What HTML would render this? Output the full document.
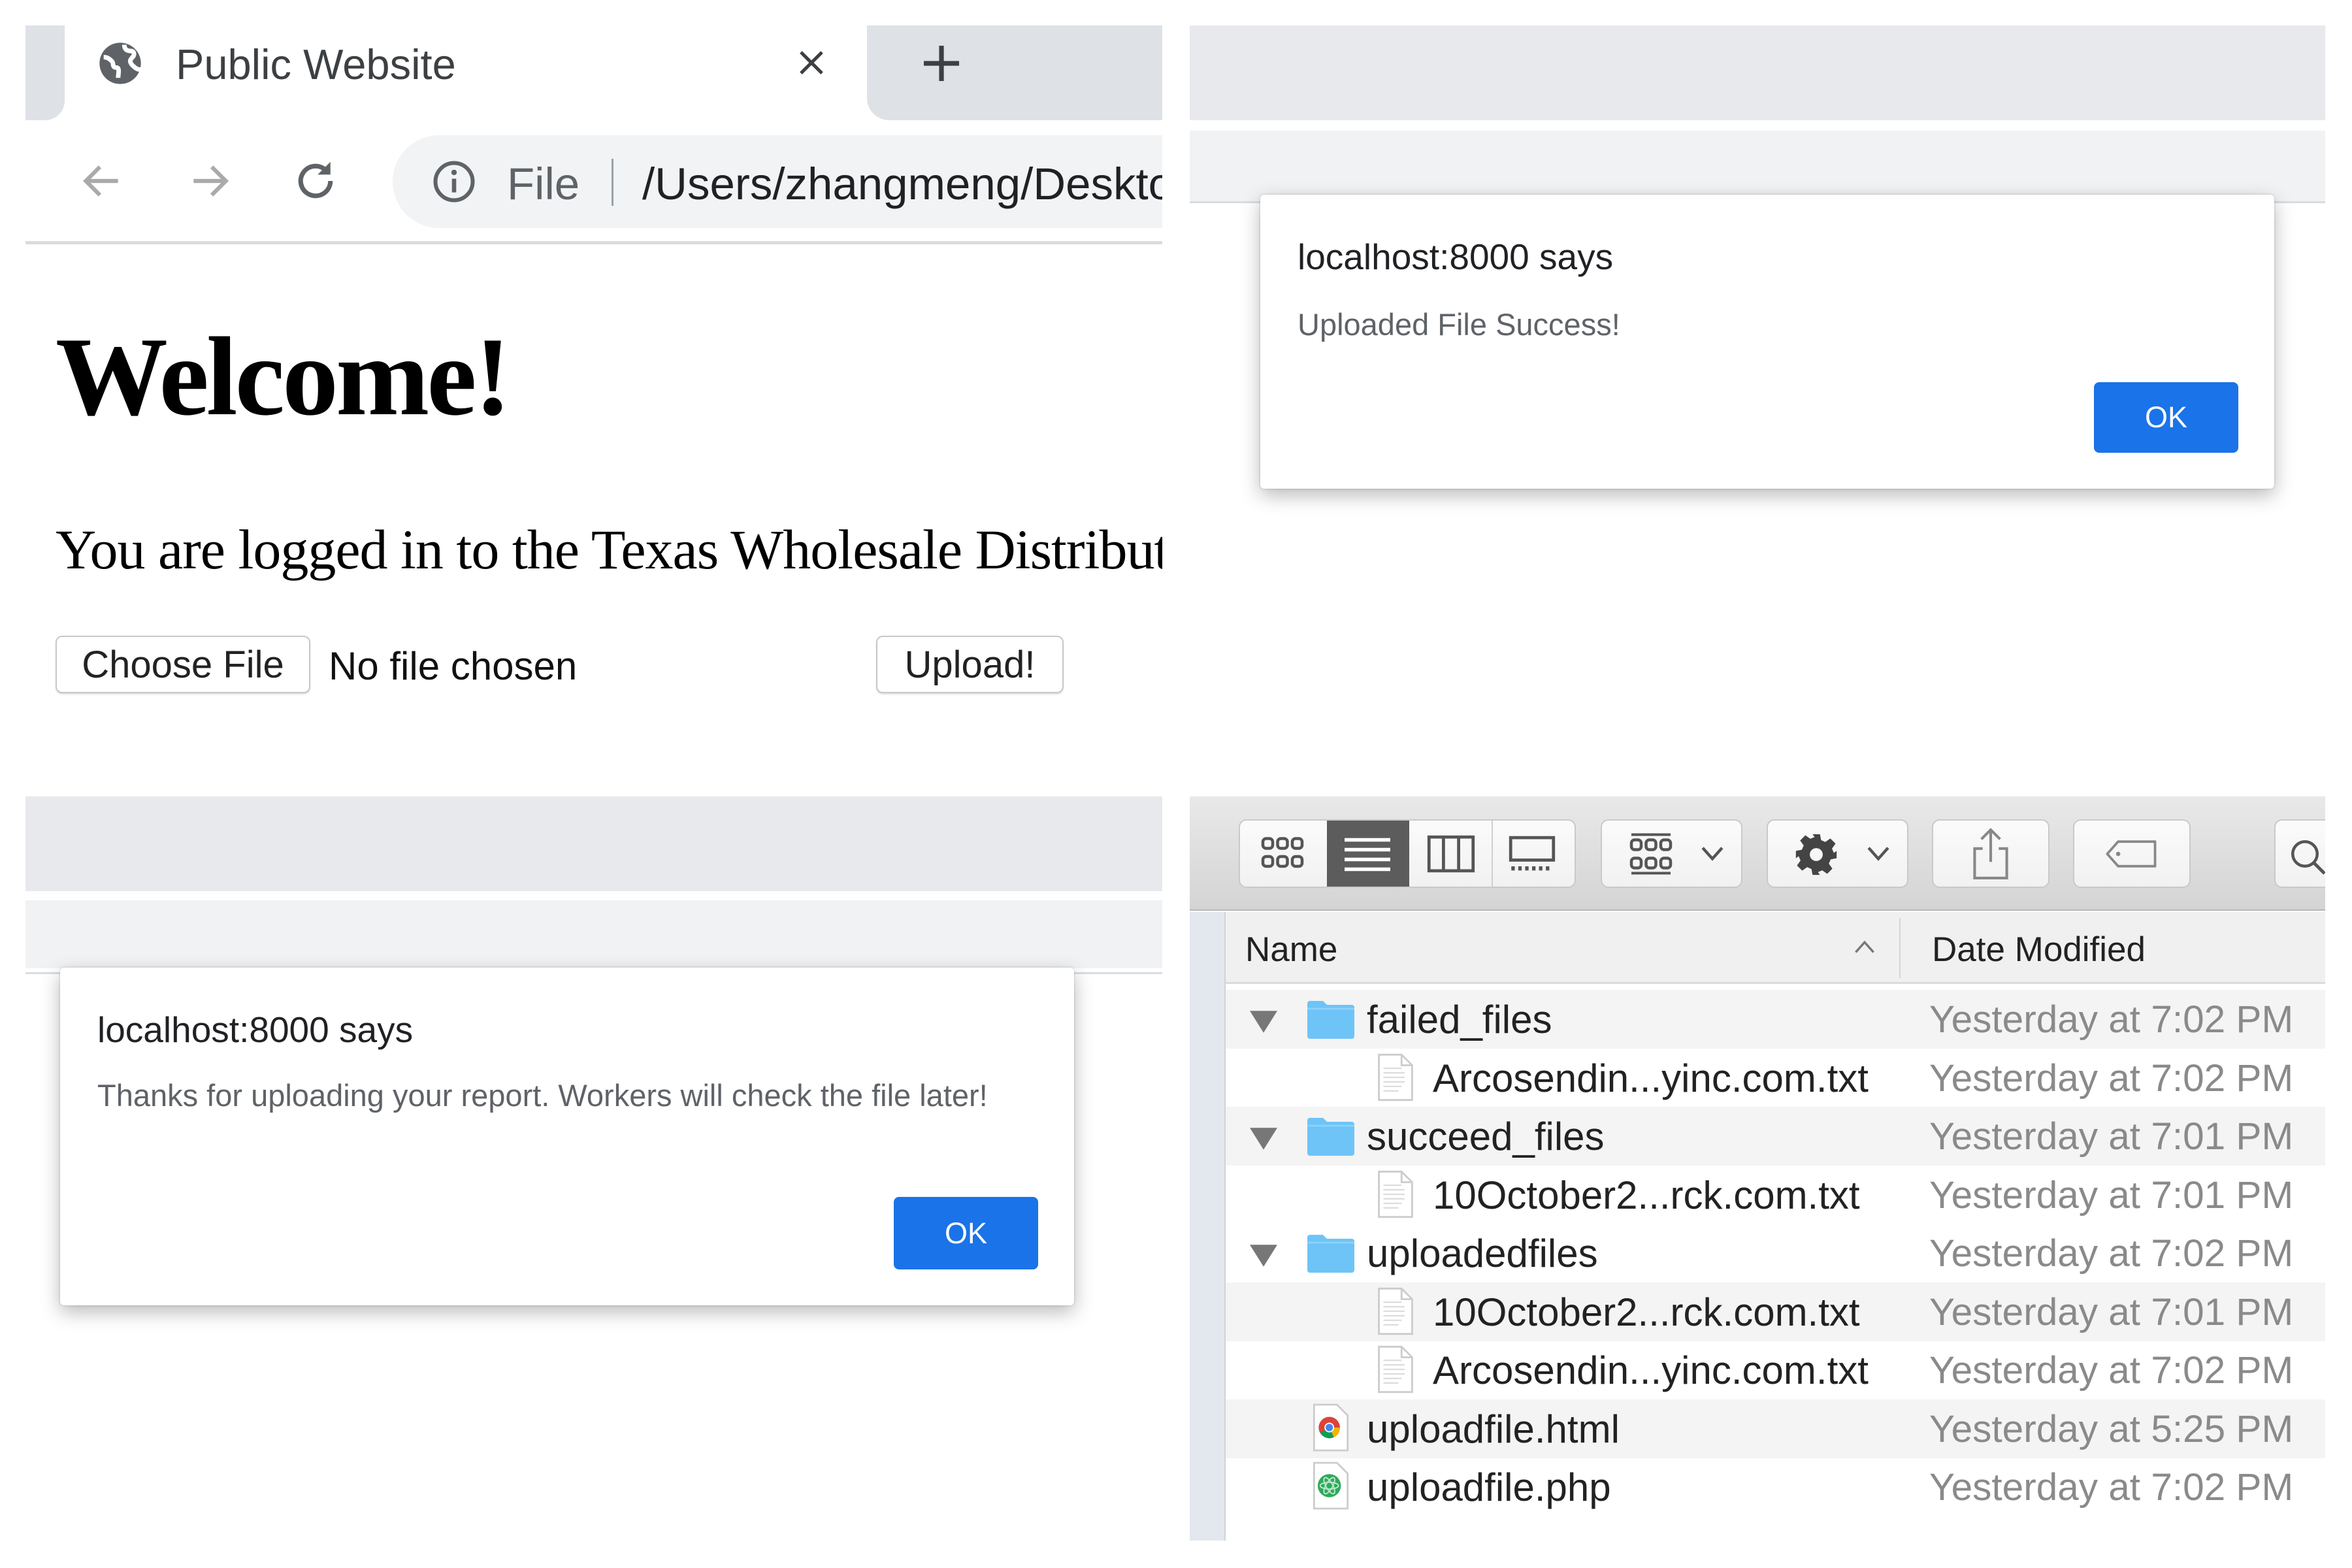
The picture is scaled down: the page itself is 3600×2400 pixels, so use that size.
<!DOCTYPE html>
<html><head><meta charset="utf-8"><style>
*{margin:0;padding:0;box-sizing:border-box}
body{width:3600px;height:2400px;background:#fff;position:relative;overflow:hidden;font-family:"Liberation Sans",sans-serif}
.a{position:absolute}
.panel{position:absolute;overflow:hidden;background:#fff}
.dlg{position:absolute;background:#fff;border-radius:6px;box-shadow:0 10px 30px rgba(0,0,0,.28),0 0 3px rgba(0,0,0,.2)}
.dt{position:absolute;font-size:55px;color:#202124;white-space:nowrap;line-height:1}
.dm{position:absolute;font-size:47px;color:#5f6368;white-space:nowrap;line-height:1}
.ok{position:absolute;background:#1a73e8;border-radius:8px;color:#fff;font-size:45px;display:flex;align-items:center;justify-content:center}
.btn{position:absolute;border:2px solid #c8c8c8;border-radius:10px;background:#fff;box-shadow:0 2px 2px rgba(0,0,0,.12);font-size:58px;color:#222;display:flex;align-items:center;justify-content:center}
.row{position:absolute;left:55px;width:1700px;height:90px}
.row.g{background:#f4f4f4}
.nm{position:absolute;font-size:60px;color:#222;line-height:1;white-space:nowrap}
.dtm{position:absolute;left:1132px;font-size:58.5px;color:#8a8a8a;line-height:1;white-space:nowrap}
.tbb{position:absolute;top:35px;height:105px;background:linear-gradient(#fbfbfb,#f1f1f1);border:2px solid #c9c9c9;border-radius:12px}
</style></head><body>

<div class="panel" style="left:39px;top:39px;width:1740px;height:1110px">
  <div class="a" style="left:0;top:0;width:60px;height:145px;background:#dee1e6;border-bottom-right-radius:30px"></div>
  <div class="a" style="left:1288px;top:0;width:460px;height:145px;background:#dee1e6;border-bottom-left-radius:34px"></div>
  <svg class="a" style="left:107px;top:20px" width="76" height="76" viewBox="0 0 24 24"><circle cx="12" cy="12" r="10" fill="#5f6368"/><path d="M4 9c2 0 3 1 4 2s0 3 2 3 1 3 1 5M14 3c0 2 1 3 3 3s2 2 1 3-2 2 0 4 3 2 4 2" stroke="#fff" stroke-width="2.2" fill="none"/></svg>
  <div class="a" style="left:230px;top:22px;font-size:65px;color:#3c4043;white-space:nowrap">Public Website</div>
  <svg class="a" style="left:1180px;top:34px" width="46" height="46" viewBox="0 0 10 10"><path d="M1.5 1.5l7 7M8.5 1.5l-7 7" stroke="#3c4043" stroke-width="1.1"/></svg>
  <svg class="a" style="left:1372px;top:28px" width="60" height="60" viewBox="0 0 10 10"><path d="M5 0.5v9M0.5 5h9" stroke="#3c4043" stroke-width="1.2"/></svg>
  <svg class="a" style="left:80px;top:201px" width="74" height="74" viewBox="0 0 24 24"><path d="M20 12H5M11 5l-7 7 7 7" stroke="#aaa" stroke-width="2" fill="none"/></svg>
  <svg class="a" style="left:245px;top:201px" width="74" height="74" viewBox="0 0 24 24"><path d="M4 12h15M13 5l7 7-7 7" stroke="#aaa" stroke-width="2" fill="none"/></svg>
  <svg class="a" style="left:405px;top:199px" width="78" height="78" viewBox="0 0 24 24"><path d="M19 12a7 7 0 1 1-2.1-5" stroke="#5f6368" stroke-width="2.2" fill="none"/><path d="M19 3v6h-6z" fill="#5f6368"/></svg>
  <div class="a" style="left:562px;top:168px;width:1300px;height:142px;background:#f1f3f4;border-radius:71px"></div>
  <svg class="a" style="left:620px;top:203px" width="72" height="72" viewBox="0 0 24 24"><circle cx="12" cy="12" r="9.5" stroke="#5f6368" stroke-width="2" fill="none"/><path d="M12 10.5v7" stroke="#5f6368" stroke-width="2.2"/><circle cx="12" cy="7.3" r="1.4" fill="#5f6368"/></svg>
  <div class="a" style="left:737px;top:203px;font-size:69px;color:#5f6368">File</div>
  <div class="a" style="left:897px;top:204px;width:3px;height:72px;background:#9aa0a6"></div>
  <div class="a" style="left:944px;top:203px;font-size:69px;color:#202124;white-space:nowrap">/Users/zhangmeng/Desktop</div>
  <div class="a" style="left:0;top:330px;width:1740px;height:5px;background:#dadce0"></div>
  <div class="a" style="left:46px;top:440px;font-family:'Liberation Serif',serif;font-weight:bold;font-size:172px;color:#000;white-space:nowrap;letter-spacing:-4px">Welcome!</div>
  <div class="a" style="left:46px;top:752px;font-family:'Liberation Serif',serif;font-size:86px;color:#000;white-space:nowrap;letter-spacing:-1px">You are logged in to the Texas Wholesale Distributors</div>
  <div class="btn" style="left:46px;top:934px;width:390px;height:88px">Choose File</div>
  <div class="a" style="left:464px;top:946px;font-size:60px;color:#111;white-space:nowrap">No file chosen</div>
  <div class="btn" style="left:1302px;top:934px;width:287px;height:88px">Upload!</div>
</div>

<div class="panel" style="left:1821px;top:39px;width:1738px;height:1110px">
  <div class="a" style="left:0;top:0;width:1738px;height:145px;background:#e8e9ed"></div>
  <div class="a" style="left:0;top:161px;width:1738px;height:108px;background:#f1f2f4"></div>
  <div class="a" style="left:0;top:269px;width:1738px;height:3px;background:#dadce0"></div>
</div>
<div class="dlg" style="left:1929px;top:298px;width:1552px;height:450px">
  <div class="dt" style="left:57px;top:68px">localhost:8000 says</div>
  <div class="dm" style="left:57px;top:175px">Uploaded File Success!</div>
  <div class="ok" style="left:1276px;top:287px;width:221px;height:108px">OK</div>
</div>

<div class="panel" style="left:39px;top:1219px;width:1740px;height:1000px">
  <div class="a" style="left:0;top:0;width:1740px;height:145px;background:#e8e9ed"></div>
  <div class="a" style="left:0;top:159px;width:1740px;height:104px;background:#f1f2f4"></div>
  <div class="a" style="left:0;top:269px;width:1740px;height:3px;background:#dadce0"></div>
</div>
<div class="dlg" style="left:92px;top:1481px;width:1552px;height:517px">
  <div class="dt" style="left:57px;top:68px">localhost:8000 says</div>
  <div class="dm" style="left:57px;top:172px">Thanks for uploading your report. Workers will check the file later!</div>
  <div class="ok" style="left:1276px;top:351px;width:221px;height:111px">OK</div>
</div>

<div class="panel" style="left:1821px;top:1219px;width:1738px;height:1139px">
  <div class="a" style="left:0;top:0;width:1738px;height:175px;background:linear-gradient(#e9e9e9,#d4d4d4);border-bottom:2px solid #b5b5b5"></div>
  <div class="tbb" style="left:75px;width:516px;overflow:hidden">
    <div class="a" style="left:133px;top:-2px;width:126px;height:105px;background:#5c5c5c"></div>
    <div class="a" style="left:385px;top:0;width:2px;height:101px;background:#cfcfcf"></div>
    <svg class="a" style="left:30px;top:22px" width="70" height="56" viewBox="0 0 14 11"><g fill="none" stroke="#555" stroke-width=".9"><rect x="1" y="1" width="3" height="3" rx="1"/><rect x="5.5" y="1" width="3" height="3" rx="1"/><rect x="10" y="1" width="3" height="3" rx="1"/><rect x="1" y="6.5" width="3" height="3" rx="1"/><rect x="5.5" y="6.5" width="3" height="3" rx="1"/><rect x="10" y="6.5" width="3" height="3" rx="1"/></g></svg>
    <svg class="a" style="left:160px;top:24px" width="70" height="56" viewBox="0 0 14 11"><path d="M0 1h14M0 4h14M0 7h14M0 10h14" stroke="#fff" stroke-width="1.1"/></svg>
    <svg class="a" style="left:285px;top:22px" width="76" height="58" viewBox="0 0 14 11"><rect x=".6" y=".6" width="12.8" height="9.8" fill="none" stroke="#555" stroke-width=".9"/><path d="M4.8 .6v9.8M9.2 .6v9.8" stroke="#555" stroke-width=".9"/></svg>
    <svg class="a" style="left:410px;top:22px" width="74" height="60" viewBox="0 0 14 11"><rect x=".8" y=".6" width="12.4" height="6.5" fill="none" stroke="#555" stroke-width=".9"/><path d="M1 9.5h12" stroke="#555" stroke-width="1.2" stroke-dasharray="1 1"/></svg>
  </div>
  <div class="tbb" style="left:629px;width:217px">
    <svg class="a" style="left:40px;top:18px" width="70" height="66" viewBox="0 0 14 13"><path d="M1 .6h12M1 12.4h12" stroke="#555" stroke-width=".8"/><g fill="none" stroke="#555" stroke-width=".9"><rect x="1" y="2.2" width="3" height="3" rx="1"/><rect x="5.5" y="2.2" width="3" height="3" rx="1"/><rect x="10" y="2.2" width="3" height="3" rx="1"/><rect x="1" y="7.8" width="3" height="3" rx="1"/><rect x="5.5" y="7.8" width="3" height="3" rx="1"/><rect x="10" y="7.8" width="3" height="3" rx="1"/></g></svg>
    <svg class="a" style="left:150px;top:38px" width="38" height="26" viewBox="0 0 10 7"><path d="M1 1l4 4.5 4-4.5" stroke="#555" stroke-width="1.2" fill="none"/></svg>
  </div>
  <div class="tbb" style="left:883px;width:217px">
    <svg class="a" style="left:40px;top:18px" width="68" height="68" viewBox="0 0 24 24"><path fill="#444" d="M10 1h4l.6 3.2 2.3 1 2.7-1.9 2.8 2.8-1.9 2.7 1 2.3L23 10v4l-3.2.6-1 2.3 1.9 2.7-2.8 2.8-2.7-1.9-2.3 1L14 23h-4l-.6-3.2-2.3-1-2.7 1.9-2.8-2.8 1.900-2.7-1-2.3L1 14v-4l3.2-.6 1-2.3-1.9-2.7 2.8-2.8 2.7 1.9 2.3-1zM12 8.5a3.5 3.5 0 1 0 0 7 3.5 3.5 0 0 0 0-7z"/></svg>
    <svg class="a" style="left:150px;top:38px" width="38" height="26" viewBox="0 0 10 7"><path d="M1 1l4 4.5 4-4.5" stroke="#555" stroke-width="1.2" fill="none"/></svg>
  </div>
  <div class="tbb" style="left:1136px;width:180px">
    <svg class="a" style="left:55px;top:10px" width="66" height="82" viewBox="0 0 16 20"><path d="M5 8H2v11h12V8h-3M8 13V1M4.5 4.5 8 1l3.5 3.5" stroke="#888" stroke-width="1" fill="none"/></svg>
  </div>
  <div class="tbb" style="left:1352px;width:180px">
    <svg class="a" style="left:45px;top:28px" width="86" height="46" viewBox="0 0 20 11"><path d="M5 1h13.5v9H5L1 5.5z" stroke="#888" stroke-width=".9" fill="none" stroke-linejoin="round"/><circle cx="5" cy="5.5" r=".8" fill="#888"/></svg>
  </div>
  <div class="tbb" style="left:1660px;width:180px">
    <svg class="a" style="left:20px;top:26px" width="60" height="60" viewBox="0 0 24 24"><circle cx="10" cy="10" r="7.5" stroke="#555" stroke-width="1.8" fill="none"/><path d="M15.5 15.5 22 22" stroke="#555" stroke-width="2"/></svg>
  </div>
  <div class="a" style="left:0;top:177px;width:55px;height:962px;background:#e3e7ee;border-right:2px solid #d0d3d8"></div>
  <div class="a" style="left:55px;top:177px;width:1700px;height:110px;background:#f0f0f0;border-bottom:3px solid #dcdcdc"></div>
  <div class="a" style="left:85px;top:204px;font-size:53px;color:#222">Name</div>
  <svg class="a" style="left:1016px;top:218px" width="34" height="24" viewBox="0 0 10 7"><path d="M1 6 5 1.5 9 6" stroke="#777" stroke-width="1" fill="none"/></svg>
  <div class="a" style="left:1086px;top:186px;width:2px;height:92px;background:#d5d5d5"></div>
  <div class="a" style="left:1136px;top:204px;font-size:53px;color:#222">Date Modified</div>

  <div class="row g" style="top:296px"></div>
  <div class="row" style="top:386px"></div>
  <div class="row g" style="top:475px"></div>
  <div class="row" style="top:565px"></div>
  <div class="row" style="top:654px"></div>
  <div class="row g" style="top:744px"></div>
  <div class="row" style="top:833px"></div>
  <div class="row g" style="top:923px"></div>
  <div class="row" style="top:1012px"></div>

  <svg class="a" style="left:92px;top:328px" width="42" height="34" viewBox="0 0 10 8"><path d="M0 0h10L5 8z" fill="#777"/></svg>
  <svg class="a" style="left:92px;top:507px" width="42" height="34" viewBox="0 0 10 8"><path d="M0 0h10L5 8z" fill="#777"/></svg>
  <svg class="a" style="left:92px;top:686px" width="42" height="34" viewBox="0 0 10 8"><path d="M0 0h10L5 8z" fill="#777"/></svg>
  <svg class="a" style="left:180px;top:313px" width="72" height="58" viewBox="0 0 18 14.5"><path d="M0 1a1 1 0 0 1 1-1h5l1.5 1.5H17a1 1 0 0 1 1 1V13.5a1 1 0 0 1-1 1H1a1 1 0 0 1-1-1z" fill="#6ec4f7"/><path d="M0 3h18" stroke="#8fd3fa" stroke-width=".6"/></svg>
  <svg class="a" style="left:180px;top:492px" width="72" height="58" viewBox="0 0 18 14.5"><path d="M0 1a1 1 0 0 1 1-1h5l1.5 1.5H17a1 1 0 0 1 1 1V13.5a1 1 0 0 1-1 1H1a1 1 0 0 1-1-1z" fill="#6ec4f7"/><path d="M0 3h18" stroke="#8fd3fa" stroke-width=".6"/></svg>
  <svg class="a" style="left:180px;top:671px" width="72" height="58" viewBox="0 0 18 14.5"><path d="M0 1a1 1 0 0 1 1-1h5l1.5 1.5H17a1 1 0 0 1 1 1V13.5a1 1 0 0 1-1 1H1a1 1 0 0 1-1-1z" fill="#6ec4f7"/><path d="M0 3h18" stroke="#8fd3fa" stroke-width=".6"/></svg>

  <svg class="a" style="left:286px;top:393px" width="58" height="74" viewBox="0 0 12 16"><path d="M.5.5h7.5l3.5 3.5v11.5H.5z" fill="#fff" stroke="#ccc" stroke-width=".6"/><path d="M8 .5V4h3.5" fill="none" stroke="#ccc" stroke-width=".6"/><path d="M2 5h6M2 6.5h7M2 8h7M2 9.5h7M2 11h6M2 12.5h5" stroke="#ddd" stroke-width=".5"/></svg>
  <svg class="a" style="left:286px;top:572px" width="58" height="74" viewBox="0 0 12 16"><path d="M.5.5h7.5l3.5 3.5v11.5H.5z" fill="#fff" stroke="#ccc" stroke-width=".6"/><path d="M8 .5V4h3.5" fill="none" stroke="#ccc" stroke-width=".6"/><path d="M2 5h6M2 6.5h7M2 8h7M2 9.5h7M2 11h6M2 12.5h5" stroke="#ddd" stroke-width=".5"/></svg>
  <svg class="a" style="left:286px;top:751px" width="58" height="74" viewBox="0 0 12 16"><path d="M.5.5h7.5l3.5 3.5v11.5H.5z" fill="#fff" stroke="#ccc" stroke-width=".6"/><path d="M8 .5V4h3.5" fill="none" stroke="#ccc" stroke-width=".6"/><path d="M2 5h6M2 6.5h7M2 8h7M2 9.5h7M2 11h6M2 12.5h5" stroke="#ddd" stroke-width=".5"/></svg>
  <svg class="a" style="left:286px;top:840px" width="58" height="74" viewBox="0 0 12 16"><path d="M.5.5h7.5l3.5 3.5v11.5H.5z" fill="#fff" stroke="#ccc" stroke-width=".6"/><path d="M8 .5V4h3.5" fill="none" stroke="#ccc" stroke-width=".6"/><path d="M2 5h6M2 6.5h7M2 8h7M2 9.5h7M2 11h6M2 12.5h5" stroke="#ddd" stroke-width=".5"/></svg>

  <svg class="a" style="left:188px;top:928px" width="56" height="76" viewBox="0 0 12 16"><path d="M.5.5h7.5l3.5 3.5v11.5H.5z" fill="#fff" stroke="#ccc" stroke-width=".6"/><circle cx="5.5" cy="8" r="3.5" fill="#db4437"/><path d="M5.5 8 2.5 9.7A3.5 3.5 0 0 0 7 11.2z" fill="#0f9d58"/><path d="M5.5 8 9 8A3.5 3.5 0 0 1 7 11.2z" fill="#f4b400"/><circle cx="5.5" cy="8" r="1.6" fill="#fff"/><circle cx="5.5" cy="8" r="1.2" fill="#4285f4"/></svg>
  <svg class="a" style="left:188px;top:1017px" width="56" height="76" viewBox="0 0 12 16"><path d="M.5.5h7.5l3.5 3.5v11.5H.5z" fill="#fff" stroke="#ccc" stroke-width=".6"/><circle cx="5.5" cy="8" r="3.8" fill="#2eaa5c"/><g fill="none" stroke="#bfe9cc" stroke-width=".4"><ellipse cx="5.5" cy="8" rx="3" ry="1.1"/><ellipse cx="5.5" cy="8" rx="3" ry="1.1" transform="rotate(60 5.5 8)"/><ellipse cx="5.5" cy="8" rx="3" ry="1.1" transform="rotate(-60 5.5 8)"/></g></svg>

  <div class="nm" style="left:271px;top:312px">failed_files</div>
  <div class="nm" style="left:372px;top:402px">Arcosendin...yinc.com.txt</div>
  <div class="nm" style="left:271px;top:491px">succeed_files</div>
  <div class="nm" style="left:372px;top:581px">10October2...rck.com.txt</div>
  <div class="nm" style="left:271px;top:670px">uploadedfiles</div>
  <div class="nm" style="left:372px;top:760px">10October2...rck.com.txt</div>
  <div class="nm" style="left:372px;top:849px">Arcosendin...yinc.com.txt</div>
  <div class="nm" style="left:271px;top:939px">uploadfile.html</div>
  <div class="nm" style="left:271px;top:1028px">uploadfile.php</div>

  <div class="dtm" style="top:313px">Yesterday at 7:02 PM</div>
  <div class="dtm" style="top:403px">Yesterday at 7:02 PM</div>
  <div class="dtm" style="top:492px">Yesterday at 7:01 PM</div>
  <div class="dtm" style="top:582px">Yesterday at 7:01 PM</div>
  <div class="dtm" style="top:671px">Yesterday at 7:02 PM</div>
  <div class="dtm" style="top:761px">Yesterday at 7:01 PM</div>
  <div class="dtm" style="top:850px">Yesterday at 7:02 PM</div>
  <div class="dtm" style="top:940px">Yesterday at 5:25 PM</div>
  <div class="dtm" style="top:1029px">Yesterday at 7:02 PM</div>
</div>
</body></html>
